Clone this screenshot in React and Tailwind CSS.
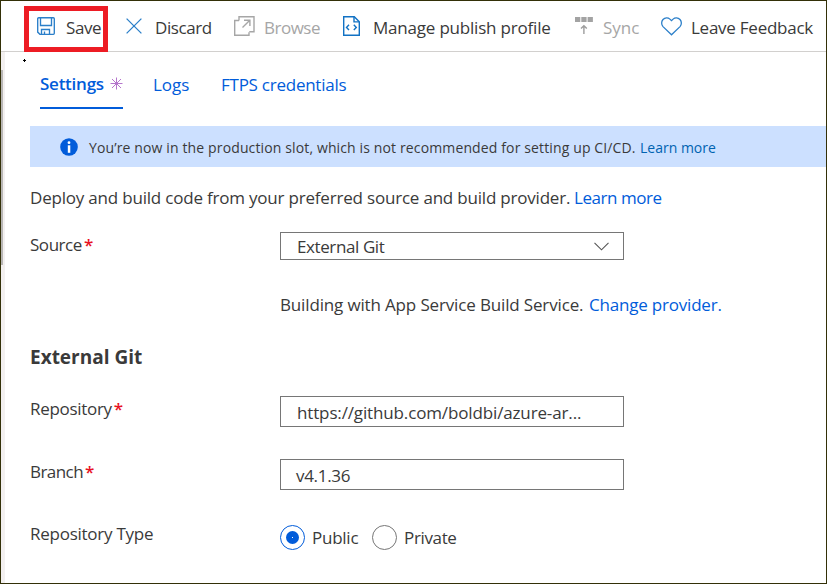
function SaveIcon() {
  return (
    <svg width="18" height="18" viewBox="0 0 18 18" fill="none" stroke="#2b7fc9" strokeWidth="1.35">
      <path d="M.7 1.7a1 1 0 0 1 1-1h14.6a1 1 0 0 1 1 1v14.6a1 1 0 0 1-1 1H2.900L.7 15.100z" />
      <path d="M3.500.7v7.800h11V.7M4.500 17.200v-4.700h8v4.700M7.500 17.200v-2.700" />
    </svg>
  );
}

function CloseIcon() {
  return (
    <svg width="16" height="16" viewBox="0 0 16 16" fill="none" stroke="#2b7fc9" strokeWidth="1.3">
      <path d="M.6.6l14.8 14.8M15.4.6L.6 15.4" />
    </svg>
  );
}

function BrowseIcon() {
  return (
    <svg width="21" height="20" viewBox="0 0 21 20" fill="none" stroke="#a6a6a6" strokeWidth="1.4">
      <path d="M5 4.5H.7v14.8H15v-3" />
      <path d="M5 4.5V.7h15v15.1h-4.7" />
      <path d="M8.5 11.5l7.3-7.2M10 4.2h5.9v5.9" />
    </svg>
  );
}

function ProfileIcon() {
  return (
    <svg width="17" height="20" viewBox="0 0 17 20" fill="none" stroke="#1272c4" strokeWidth="1.400">
      <path d="M.7.7h10.6l5 5v13.6H.7z" />
      <path d="M11 .9v5h5" />
      <path d="M6 8.8L3.5 11.4 6 14M10.8 8.8l2.5 2.6-2.5 2.6" />
    </svg>
  );
}

function SyncIcon() {
  return (
    <svg width="18" height="17" viewBox="0 0 18 17" fill="none" stroke="#9d9d9d" strokeWidth="1.4">
      <path d="M0 0h5.3v5H0zM6.3 0h5.3v5H6.3zM12.6 0h5.3v5h-5.3z" fill="#a3a3a3" stroke="none" />
      <path d="M8.9 17V9M6 11.6l2.9-2.9 2.9 2.9" />
    </svg>
  );
}

function HeartIcon() {
  return (
    <svg width="21" height="19" viewBox="0 0 21 19" fill="none" stroke="#2b7fc9" strokeWidth="1.3">
      <path d="M10.5 17.8L2 9.6C.2 7.7.2 4.5 2 2.5C4 .3 7 .3 8.9 2.1L10.5 3.7L12.1 2.1C14 .3 17 .3 19 2.5C20.8 4.5 20.8 7.7 19 9.6z" />
    </svg>
  );
}

function Star() {
  return <span className="ml-0.5 font-semibold text-[#e81123]">*</span>;
}

function Label({ children, className = "" }) {
  return <div className={`w-[250px] shrink-0 whitespace-nowrap pt-px leading-6 ${className}`}>{children}</div>;
}

export default function App() {
  return (
    <div className="flex h-[584px] w-[827px] flex-col overflow-hidden border border-[#333008] bg-white font-['Open_Sans',sans-serif] text-[17px] text-[#3a3a3a]">
      <header className="flex h-[51px] shrink-0 whitespace-nowrap border-b border-[#d2d0ce] leading-6">
        <div className="relative z-10 ml-[23px] mt-[5px] flex h-[46px] w-[84px] shrink-0 border-[5px] border-[#ed1c24]">
          <div className="ml-2 mt-[6px]"><SaveIcon /></div>
          <span className="ml-[11px] mt-[5px] tracking-[-0.4px]">Save</span>
        </div>
        <div className="ml-[18px] mt-[17px] w-[16px] shrink-0"><CloseIcon /></div>
        <span className="ml-[13px] mt-[15px] w-[66px] shrink-0 tracking-[-0.4px]">Discard</span>
        <div className="ml-[13px] mt-[15px] w-[21px] shrink-0"><BrowseIcon /></div>
        <span className="ml-[9px] mt-[15px] w-[79px] shrink-0 tracking-[-0.5px] text-[#a6a6a6]">Browse</span>
        <div className="mt-[15px] w-[17px] shrink-0"><ProfileIcon /></div>
        <span className="ml-[13px] mt-[15px] w-[202px] shrink-0 tracking-[-0.2px]">Manage publish profile</span>
        <div className="mt-[16px] w-[18px] shrink-0"><SyncIcon /></div>
        <span className="ml-[10px] mt-[15px] w-[58px] shrink-0 text-[#a6a6a6]">Sync</span>
        <div className="mt-[16px] w-[21px] shrink-0"><HeartIcon /></div>
        <span className="ml-[9px] mt-[15px] tracking-[-0.25px]">Leave Feedback</span>
      </header>

      <div className="flex flex-1">
        <div className="h-full w-1 shrink-0 bg-[#f3f0f0] pt-[18px]">
          <div className="h-[195px] w-[2px] bg-[#b9b7b5]" />
        </div>

        <main className="flex min-w-0 flex-1 flex-col pl-[25px]">
          <nav className="relative flex h-[74px] whitespace-nowrap pl-[10px] leading-6 text-[#015cda]">
            <svg className="absolute -left-[7px] top-[7px]" width="3" height="3" viewBox="0 0 3 3" fill="#000"><path d="M1 0h1v1h1v1H2v1H1V2H0V1h1z" /></svg>
            <div className="mt-[20px] flex h-[37px] w-[83px] border-b-2 border-[#015cda]">
              <span className="font-semibold tracking-[-0.25px]">Settings</span>
              <svg className="ml-auto mt-[5px]" width="13" height="13" viewBox="0 0 13 13" stroke="#b576cc" strokeWidth="1"><path d="M6.5 .5v12M.5 6.5h12M2 2l9 9M11 2l-9 9" /></svg>
            </div>
            <span className="ml-[30px] mt-[21px] w-[68px]">Logs</span>
            <span className="mt-[21px] tracking-[-0.25px]">FTPS credentials</span>
          </nav>

          <div className="flex h-[41px] items-center whitespace-nowrap bg-[#cce0ff] pl-[30px] text-[14px]">
            <svg className="mt-px" width="18" height="18" viewBox="0 0 18 18"><circle cx="9" cy="9" r="8.8" fill="#015cda" /><circle cx="9" cy="4.7" r="1.4" fill="#fff" /><path d="M7.8 7.3h2.5v7.5H7.800z" fill="#fff" /></svg>
            <span className="ml-[11px] mt-[2px] w-[551px] tracking-[0.13px]">You’re now in the production slot, which is not recommended for setting up CI/CD.</span>
            <span className="mt-[2px] text-[#0063b1]">Learn more</span>
          </div>

          <p className="mt-[19px] flex whitespace-nowrap leading-6">
            <span className="w-[544px] tracking-[-0.2px]">Deploy and build code from your preferred source and build provider.</span>
            <span className="tracking-[-0.45px] text-[#015cda]">Learn more</span>
          </p>

          <div className="mt-[22px] flex h-[61px]">
            <Label className="tracking-[-0.45px]">Source<Star /></Label>
            <div className="flex h-[28px] w-[344px] items-center justify-between border border-[#767676] pl-4 pr-[14px]">
              <span className="mt-0.5 leading-6 tracking-[-0.4px]">External Git</span>
              <svg width="15" height="9" viewBox="0 0 15 9" fill="none" stroke="#555" strokeWidth="1.1"><path d="M.5.8l7 7 7-7" /></svg>
            </div>
          </div>
          <p className="ml-[250px] flex whitespace-nowrap leading-6">
            <span className="w-[309px] tracking-[-0.15px]">Building with App Service Build Service.</span>
            <span className="tracking-[-0.2px] text-[#015cda]">Change provider.</span>
          </p>

          <h2 className="mt-[28px] text-[19px] font-bold leading-6">External Git</h2>

          <div className="mt-[27px] flex h-[63px]">
            <Label className="tracking-[-0.3px]">Repository<Star /></Label>
            <div className="h-[31px] w-[344px] border border-[#767676] pl-4 pt-1 leading-6 tracking-[-0.14px]">https://github.com/boldbi/azure-ar...</div>
          </div>
          <div className="flex h-[62px]">
            <Label className="tracking-[-0.55px]">Branch<Star /></Label>
            <div className="h-[31px] w-[344px] border border-[#767676] pl-[15px] pt-1 leading-6 tracking-[-0.3px]">v4.1.36</div>
          </div>
          <div className="flex leading-6">
            <Label className="tracking-[-0.25px]">Repository Type</Label>
            <div className="mt-[4px] flex h-[25px]">
              <span className="flex size-[25px] items-center justify-center rounded-full border border-[#015cda]"><span className="flex size-[13px] items-center justify-center rounded-full bg-[#015cda]"><span className="size-px bg-white" /></span></span>
              <span className="ml-[7px] mt-px w-[60px] tracking-[-0.25px]">Public</span>
              <span className="size-[25px] rounded-full border border-[#767676]" />
              <span className="ml-[7px] mt-px tracking-[-0.35px]">Private</span>
            </div>
          </div>
        </main>
      </div>
    </div>
  );
}
